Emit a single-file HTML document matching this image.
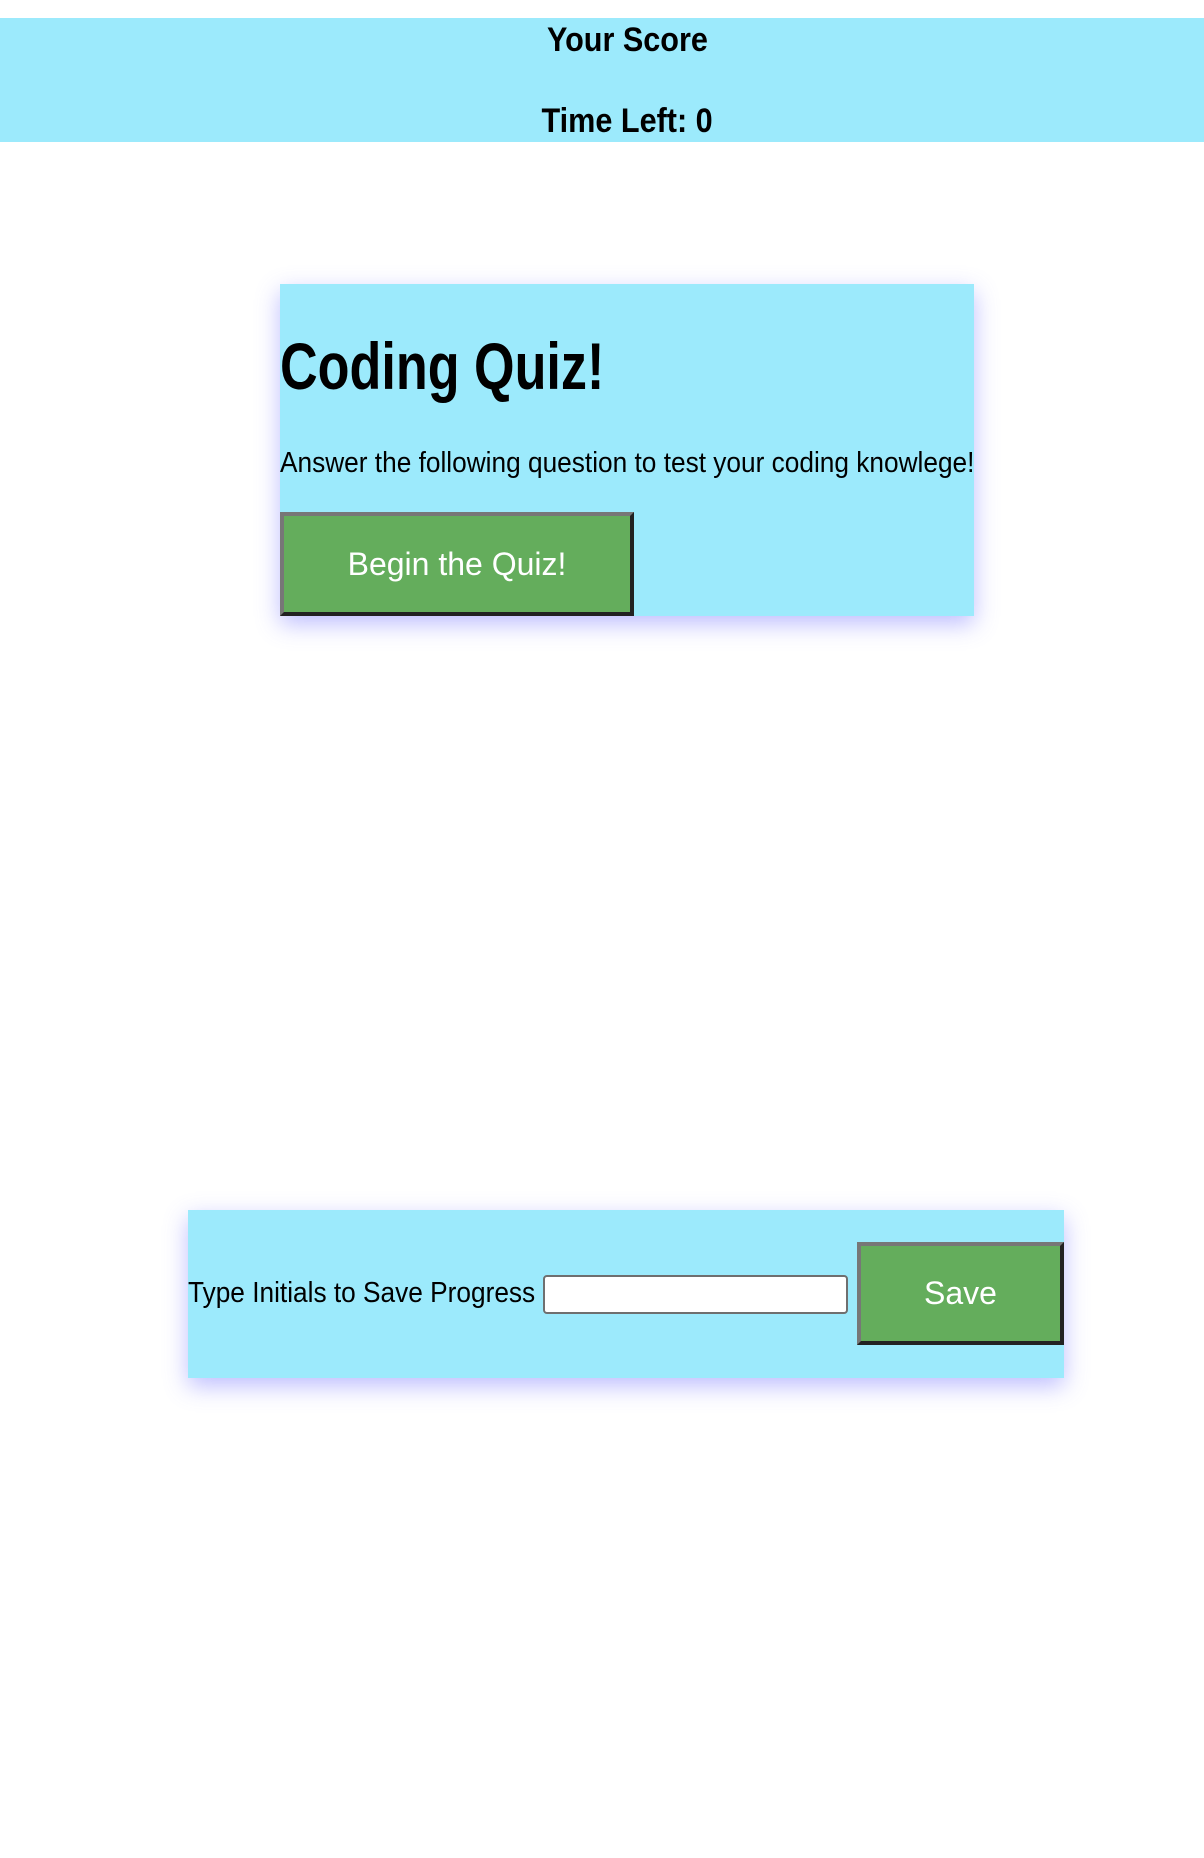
<!DOCTYPE html>
<html><head><meta charset="utf-8">
<style>
html,body{margin:0;padding:0;background:#fff;width:1204px;height:1858px;overflow:hidden;font-family:"Liberation Sans",Arial,sans-serif;}
.abs{position:absolute;}
.n{display:inline-block;white-space:nowrap;}
.hdr{left:0;top:18px;width:1204px;height:124px;background:#9ceafc;}
.hdr div{position:absolute;left:25px;width:1204px;text-align:center;font-weight:bold;font-size:34px;line-height:40px;}
.card{background:#9ceafc;box-shadow:0 8px 22px rgba(110,110,255,0.45);}
.btn{background:#64ad5c;border-style:solid;border-width:4px;border-color:#777 #222 #222 #777;box-sizing:border-box;color:#fff;font-size:32px;display:flex;align-items:center;justify-content:center;}
</style></head><body>
<div class="abs hdr">
 <div style="top:2px"><span class="n" style="transform-origin:center;transform:scaleX(0.9)">Your Score</span></div>
 <div style="top:83px"><span class="n" style="transform-origin:center;transform:scaleX(0.9)">Time Left: 0</span></div>
</div>

<div class="abs card" style="left:280px;top:284px;width:694px;height:332px;">
 <div class="abs" style="left:0;top:44px;font-weight:bold;font-size:66px;line-height:76px;"><span class="n" style="transform-origin:left;transform:scaleX(0.79)">Coding Quiz!</span></div>
 <div class="abs" style="left:0;top:162px;font-size:29px;line-height:34px;"><span class="n" style="transform-origin:left;transform:scaleX(0.905)">Answer the following question to test your coding knowlege!</span></div>
 <div class="abs btn" style="left:0;top:228px;width:354px;height:104px;">Begin the Quiz!</div>
</div>

<div class="abs card" style="left:188px;top:1210px;width:876px;height:168px;">
 <div class="abs" style="left:0;top:66px;font-size:29px;line-height:34px;"><span class="n" style="transform-origin:left;transform:scaleX(0.905)">Type Initials to Save Progress</span></div>
 <div class="abs" style="left:355px;top:65px;width:305px;height:39px;box-sizing:border-box;background:#fff;border:2px solid #6f6f6f;border-radius:4px;"></div>
 <div class="abs btn" style="left:669px;top:32px;width:207px;height:103px;">Save</div>
</div>
</body></html>
